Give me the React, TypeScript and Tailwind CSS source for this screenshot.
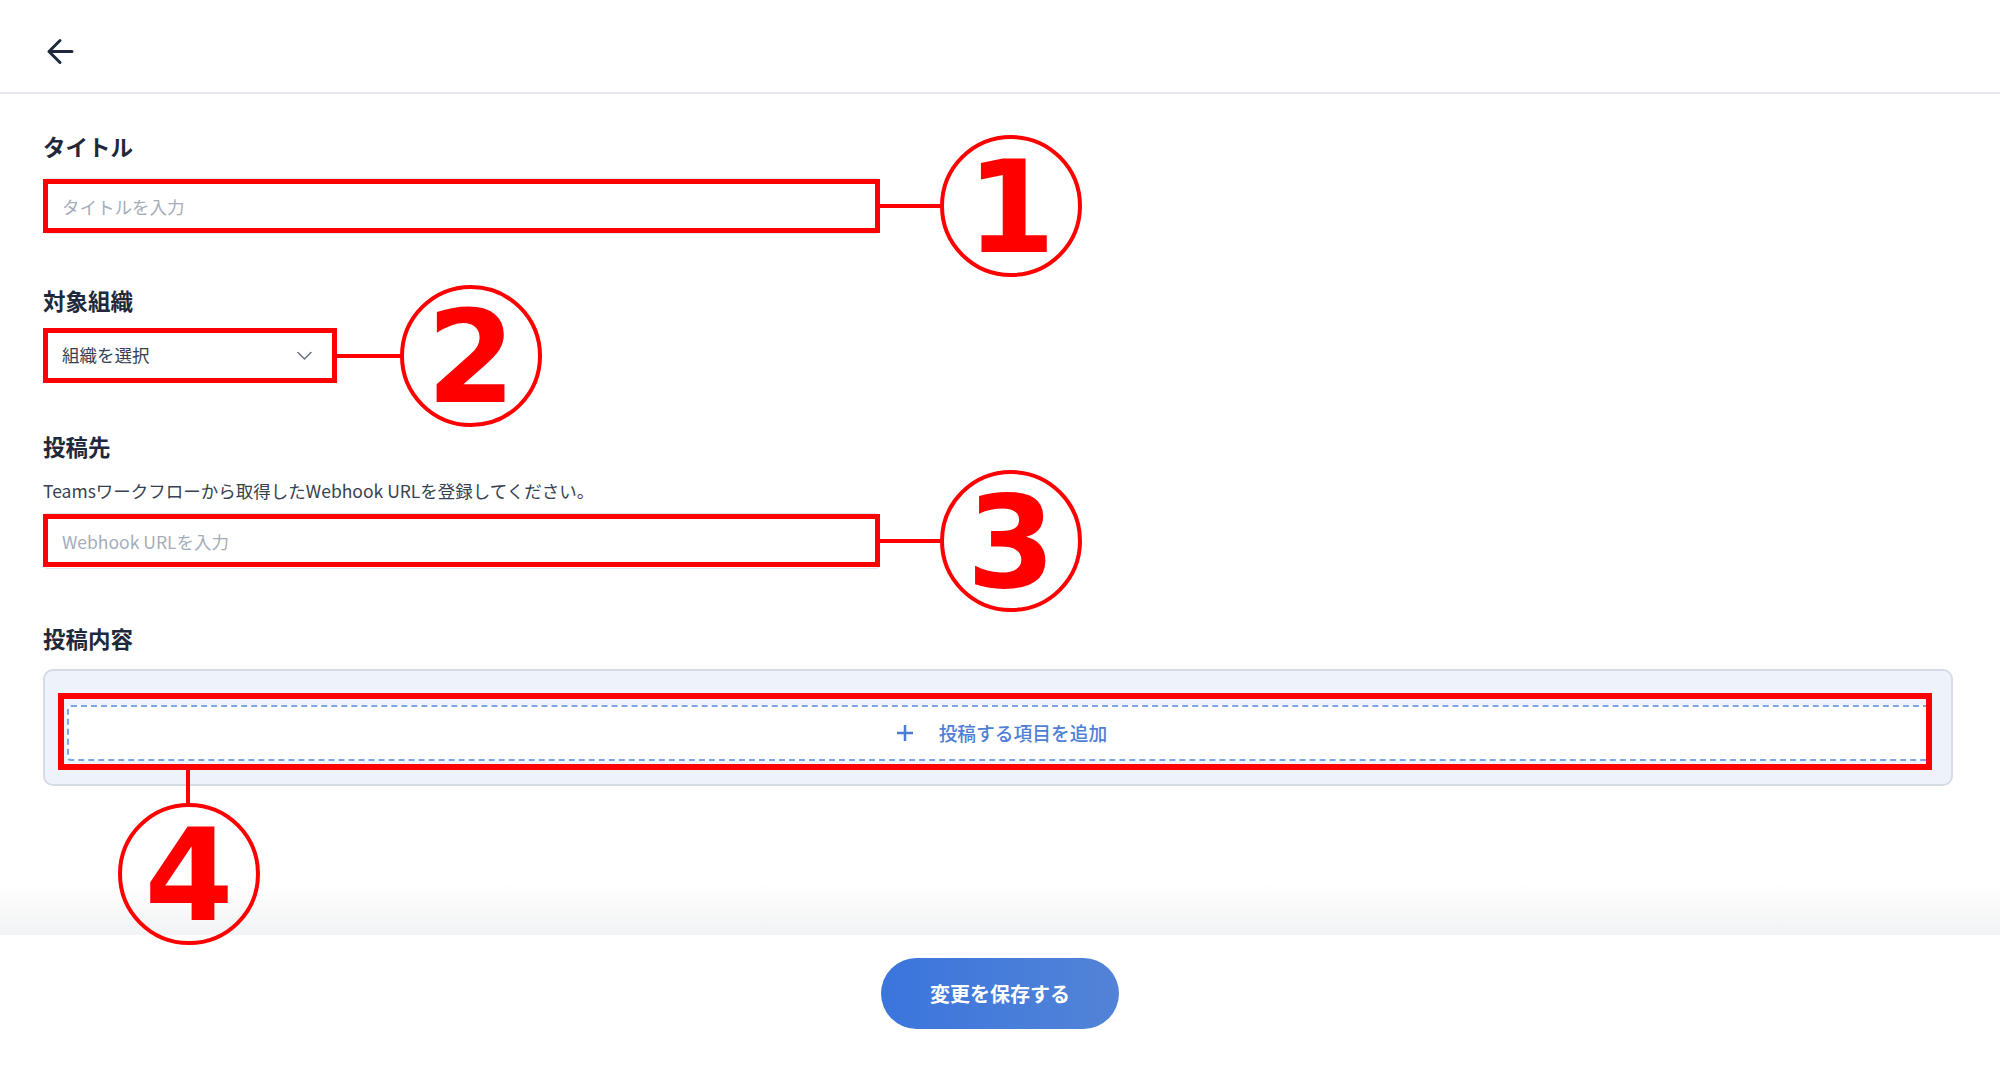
import React from 'react';

const RED = 'border-[#ff0000]';

const Badge = ({ n, className }: { n: string; className: string }) => (
  <div
    className={`absolute z-30 w-[142px] h-[142px] rounded-full border-[4px] ${RED} flex items-center justify-center text-[#ff0000] font-bold text-[128px] leading-none font-['DejaVu_Sans',sans-serif] ${className}`}
  >
    <span className="pt-[4px]">{n}</span>
  </div>
);

const Label = ({ children }: { children: React.ReactNode }) => (
  <h2 className="text-[22.5px] leading-[34px] font-bold text-[#1e293b]">{children}</h2>
);

const App = () => {
  return (
    <div className="h-screen w-full flex flex-col bg-white overflow-hidden font-['Noto_Sans_CJK_JP',sans-serif]">
      {/* header */}
      <header className="h-[94px] shrink-0 border-b-2 border-[#e5e9ef] pl-[45px] pt-[37px]">
        <svg width="30" height="30" viewBox="0 0 30 30" fill="none">
          <path
            d="M27 14.5H4 M15 3.5 4 14.5 15 25.5"
            stroke="#1e293b"
            strokeWidth="3"
            strokeLinecap="round"
            strokeLinejoin="round"
          />
        </svg>
      </header>

      <main className="flex-1 flex flex-col px-[43px] pt-[35px]">
        {/* タイトル */}
        <section className="flex flex-col gap-[15px]">
          <Label>タイトル</Label>
          <div className="relative w-[837px] h-[56px]">
            <input
              className="w-full h-full rounded-[4px] border border-[#e2e8f0] px-[18px] text-[17.5px] text-[#374151] placeholder:text-[#a5adba] outline-none"
              placeholder="タイトルを入力"
            />
            <div className={`absolute inset-x-0 inset-y-[1px] border-[5px] ${RED} pointer-events-none`} />
            <div className="absolute left-full top-1/2 -translate-y-1/2 w-[62px] h-[4px] bg-[#ff0000]" />
            <Badge n="1" className="left-[calc(100%+60px)] top-1/2 -translate-y-1/2" />
          </div>
        </section>

        {/* 対象組織 */}
        <section className="mt-[49px] flex flex-col gap-[11px]">
          <Label>対象組織</Label>
          <div className="relative w-[294px] h-[55px]">
            <button className="w-full h-full rounded-[4px] border border-[#e2e8f0] pl-[18px] pr-[24px] flex items-center justify-between text-[17.5px] text-[#374151]">
              <span>組織を選択</span>
              <svg width="15" height="10" viewBox="0 0 15 10" fill="none">
                <path d="M1 1.5 7.5 8 14 1.5" stroke="#6b7280" strokeWidth="1.5" strokeLinecap="round" strokeLinejoin="round" />
              </svg>
            </button>
            <div className={`absolute inset-0 border-[5px] ${RED} pointer-events-none`} />
            <div className="absolute left-full top-1/2 -translate-y-1/2 w-[66px] h-[4px] bg-[#ff0000]" />
            <Badge n="2" className="left-[calc(100%+63px)] top-1/2 -translate-y-1/2" />
          </div>
        </section>

        {/* 投稿先 */}
        <section className="mt-[46px] flex flex-col">
          <Label>投稿先</Label>
          <p className="mt-[15px] text-[17.5px] leading-[26px] text-[#374151]">
            Teamsワークフローから取得したWebhook URLを登録してください。
          </p>
          <div className="relative mt-[9px] w-[837px] h-[56px]">
            <input
              className="w-full h-full rounded-[4px] border border-[#e2e8f0] px-[18px] text-[17.5px] text-[#374151] placeholder:text-[#a5adba] outline-none"
              placeholder="Webhook URLを入力"
            />
            <div className={`absolute inset-x-0 top-[1px] bottom-[2px] border-[5px] ${RED} pointer-events-none`} />
            <div className="absolute left-full top-1/2 -translate-y-1/2 w-[62px] h-[4px] bg-[#ff0000]" />
            <Badge n="3" className="left-[calc(100%+60px)] top-1/2 -translate-y-1/2" />
          </div>
        </section>

        {/* 投稿内容 */}
        <section className="mt-[52px] flex flex-col gap-[14px]">
          <Label>投稿内容</Label>
          <div className="w-[1910px] rounded-[10px] border-2 border-[#d6dce4] bg-[#eef3fb] pt-[34px] pb-[23px] pl-[22px] pr-[21px]">
            <div className="relative">
              <button className="w-full h-[56px] rounded-[4px] border-2 border-dashed border-[#7ea5e8] bg-white flex items-center justify-center gap-[25px] pl-[6px] text-[#4f7fd6] text-[18.75px] font-medium">
                <svg width="18" height="18" viewBox="0 0 18 18" fill="none">
                  <path d="M9 1v16M1 9h16" stroke="#4a7bd5" strokeWidth="2.5" />
                </svg>
                <span>投稿する項目を追加</span>
              </button>
              <div className={`absolute left-[-9px] right-[-2px] top-[-12px] bottom-[-9px] border-[6px] ${RED} pointer-events-none`} />
              <div className="absolute z-30 left-[119px] top-[calc(100%+9px)] w-[4px] h-[36px] bg-[#ff0000]" />
              <Badge n="4" className="left-[51px] top-[calc(100%+42px)]" />
            </div>
          </div>
        </section>
      </main>

      {/* footer */}
      <footer className="relative z-10 h-[130px] shrink-0 bg-white flex justify-center pt-[23px]">
        <div className="absolute bottom-full inset-x-0 h-[52px] bg-linear-to-b from-white/0 to-[#f2f3f4] pointer-events-none" />
        <button className="w-[238px] h-[71px] rounded-full bg-linear-to-r from-[#3b75dc] to-[#5283d7] text-white text-[20px] font-bold">
          変更を保存する
        </button>
      </footer>
    </div>
  );
};

export default App;
